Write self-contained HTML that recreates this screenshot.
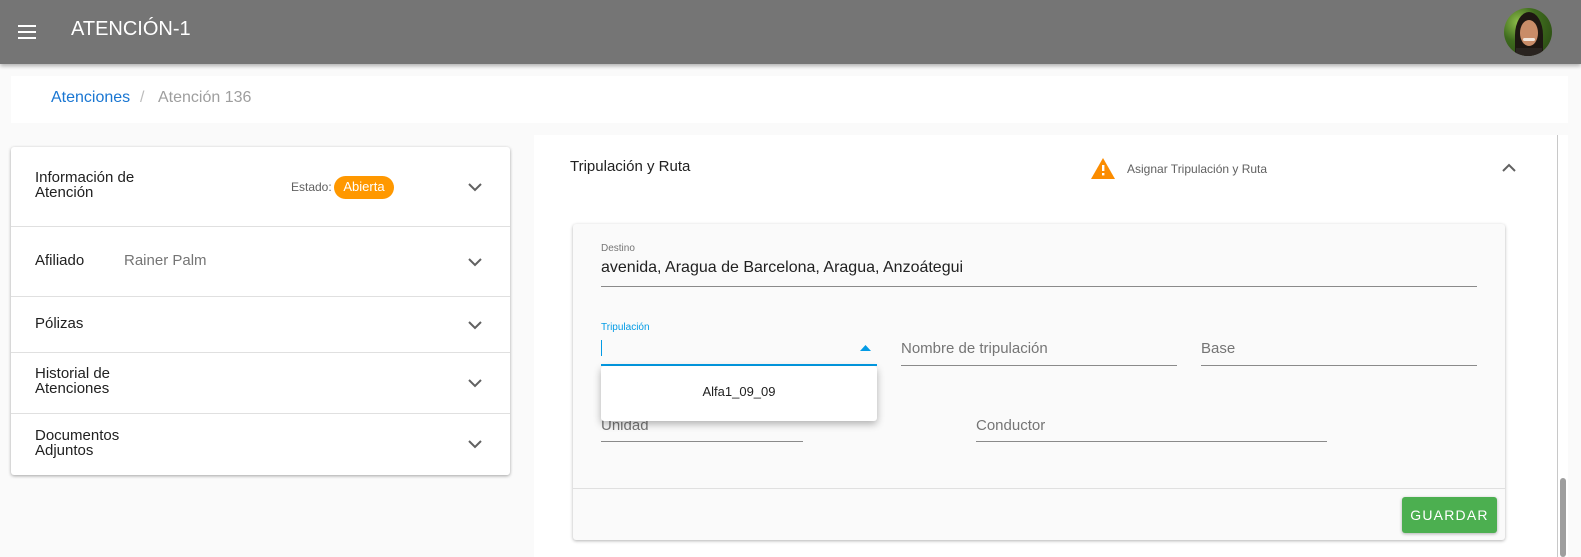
<!DOCTYPE html>
<html><head><meta charset="utf-8"><style>
*{box-sizing:border-box;margin:0;padding:0}
body{width:1581px;height:557px;background:#fafafa;font-family:"Liberation Sans",Arial,sans-serif;position:relative;overflow:hidden;color:#212121}
.a{position:absolute}
.hdr{left:0;top:0;width:1581px;height:64px;background:#757575;box-shadow:0 2px 4px rgba(0,0,0,.3);z-index:5}
.line{position:absolute;height:1px;background:#e0e0e0}
.uline{position:absolute;height:1px;background:#8a8a8a}
.chev{position:absolute;width:16px;height:10px}
.t15{font-size:15px}
</style></head><body>
<div class="a hdr">
  <div class="a" style="left:18px;top:25px;width:18px;height:2px;background:#fff"></div>
  <div class="a" style="left:18px;top:31px;width:18px;height:2px;background:#fff"></div>
  <div class="a" style="left:18px;top:37px;width:18px;height:2px;background:#fff"></div>
  <div class="a" style="left:71px;top:18px;font-size:20px;color:#fff">ATENCIÓN-1</div>
  <div class="a" style="left:1504px;top:8px;width:48px;height:48px;border-radius:50%;background:radial-gradient(circle at 30% 30%,#8fbf4a 0,#3f6b1e 40%,#24420f 100%);overflow:hidden">
    <div class="a" style="left:11px;top:4px;width:28px;height:46px;border-radius:50% 50% 10% 10%;background:#1e1712"></div>
    <div class="a" style="left:16px;top:12px;width:18px;height:26px;border-radius:50%;background:#c98c68"></div>
    <div class="a" style="left:19px;top:30px;width:12px;height:3px;border-radius:2px;background:#f2e6dc"></div>
    <div class="a" style="left:12px;top:40px;width:26px;height:10px;background:#2a2420"></div>
  </div>
</div>

<div class="a" style="left:11px;top:76px;width:1557px;height:47px;background:#fff"></div>
<div class="a" style="left:51px;top:89px;font-size:16px;color:#1976d2">Atenciones</div>
<div class="a" style="left:140px;top:89px;font-size:16px;color:#bdbdbd">/</div>
<div class="a" style="left:158px;top:89px;font-size:16px;color:#9e9e9e">Atención 136</div>

<div class="a" style="left:11px;top:147px;width:499px;height:328px;background:#fff;border-radius:3px;box-shadow:0 1px 3px rgba(0,0,0,.35)"></div>
<div class="line" style="left:11px;top:226px;width:499px"></div>
<div class="line" style="left:11px;top:296px;width:499px"></div>
<div class="line" style="left:11px;top:352px;width:499px"></div>
<div class="line" style="left:11px;top:413px;width:499px"></div>
<div class="a t15" style="left:35px;top:170px;line-height:15px">Información de<br>Atención</div>
<div class="a" style="left:291px;top:180px;font-size:12px;color:#616161">Estado:</div>
<div class="a" style="left:334px;top:176px;width:60px;height:23px;border-radius:12px;background:#ff9800;color:#fff;font-size:13px;text-align:center;line-height:22px">Abierta</div>
<div class="a t15" style="left:35px;top:252px">Afiliado</div>
<div class="a t15" style="left:124px;top:252px;color:#757575">Rainer Palm</div>
<div class="a t15" style="left:35px;top:315px">Pólizas</div>
<div class="a t15" style="left:35px;top:366px;line-height:15px">Historial de<br>Atenciones</div>
<div class="a t15" style="left:35px;top:428px;line-height:15px">Documentos<br>Adjuntos</div>
<svg class="chev" style="left:467px;top:182px" viewBox="0 0 16 10"><path d="M2 2l6 6 6-6" fill="none" stroke="#616161" stroke-width="2"/></svg>
<svg class="chev" style="left:467px;top:257px" viewBox="0 0 16 10"><path d="M2 2l6 6 6-6" fill="none" stroke="#616161" stroke-width="2"/></svg>
<svg class="chev" style="left:467px;top:320px" viewBox="0 0 16 10"><path d="M2 2l6 6 6-6" fill="none" stroke="#616161" stroke-width="2"/></svg>
<svg class="chev" style="left:467px;top:378px" viewBox="0 0 16 10"><path d="M2 2l6 6 6-6" fill="none" stroke="#616161" stroke-width="2"/></svg>
<svg class="chev" style="left:467px;top:439px" viewBox="0 0 16 10"><path d="M2 2l6 6 6-6" fill="none" stroke="#616161" stroke-width="2"/></svg>

<div class="a" style="left:534px;top:135px;width:1034px;height:422px;background:#fff"></div>
<div class="a" style="left:1557px;top:135px;width:1px;height:422px;background:#c8c8c8"></div>
<div class="a" style="left:1560px;top:478px;width:6px;height:79px;border-radius:3px;background:#9e9e9e"></div>
<div class="a t15" style="left:570px;top:158px">Tripulación y Ruta</div>
<svg class="a" style="left:1091px;top:158px" width="24" height="21" viewBox="0 0 24 21"><path d="M12 0L24 21H0z" fill="#fb8c00"/><rect x="11" y="7" width="2.4" height="6" fill="#fff"/><rect x="11" y="15" width="2.4" height="2.4" fill="#fff"/></svg>
<div class="a" style="left:1127px;top:162px;font-size:12px;color:#616161">Asignar Tripulación y Ruta</div>
<svg class="chev" style="left:1501px;top:163px" viewBox="0 0 16 10"><path d="M2 8l6-6 6 6" fill="none" stroke="#616161" stroke-width="2"/></svg>

<div class="a" style="left:573px;top:224px;width:932px;height:316px;background:#fafafa;border-radius:3px;box-shadow:0 1px 3px rgba(0,0,0,.3)"></div>
<div class="a" style="left:601px;top:243px;font-size:10px;color:#757575">Destino</div>
<div class="a" style="left:601px;top:259px;font-size:16px;color:#212121">avenida, Aragua de Barcelona, Aragua, Anzoátegui</div>
<div class="uline" style="left:601px;top:286px;width:876px"></div>

<div class="a" style="left:601px;top:322px;font-size:10px;color:#039be5">Tripulación</div>
<div class="a" style="left:601px;top:340px;width:1px;height:16px;background:#039be5"></div>
<svg class="a" style="left:860px;top:345px" width="11" height="6" viewBox="0 0 11 6"><path d="M0 6L5.5 0 11 6z" fill="#039be5"/></svg>
<div class="a" style="left:601px;top:364px;width:276px;height:2px;background:#039be5"></div>

<div class="a" style="left:901px;top:340px;font-size:15px;color:#757575">Nombre de tripulación</div>
<div class="uline" style="left:901px;top:365px;width:276px"></div>
<div class="a" style="left:1201px;top:340px;font-size:15px;color:#757575">Base</div>
<div class="uline" style="left:1201px;top:365px;width:276px"></div>

<div class="a" style="left:601px;top:417px;font-size:15px;color:#757575">Unidad</div>
<div class="uline" style="left:601px;top:441px;width:202px"></div>
<div class="a" style="left:976px;top:417px;font-size:15px;color:#757575">Conductor</div>
<div class="uline" style="left:976px;top:441px;width:351px"></div>

<div class="a" style="left:601px;top:366px;width:276px;height:55px;background:#fff;border-radius:3px;box-shadow:0 3px 8px rgba(0,0,0,.3);z-index:3"></div>
<div class="a" style="left:601px;top:384px;width:276px;text-align:center;font-size:13px;color:#212121;z-index:4">Alfa1_09_09</div>

<div class="a" style="left:573px;top:488px;width:932px;height:1px;background:#e0e0e0"></div>
<div class="a" style="left:1402px;top:497px;width:95px;height:36px;background:#4caf50;border-radius:3px;box-shadow:0 1px 3px rgba(0,0,0,.3);color:#fff;font-size:14px;letter-spacing:1.2px;text-align:center;line-height:36px">GUARDAR</div>
</body></html>
